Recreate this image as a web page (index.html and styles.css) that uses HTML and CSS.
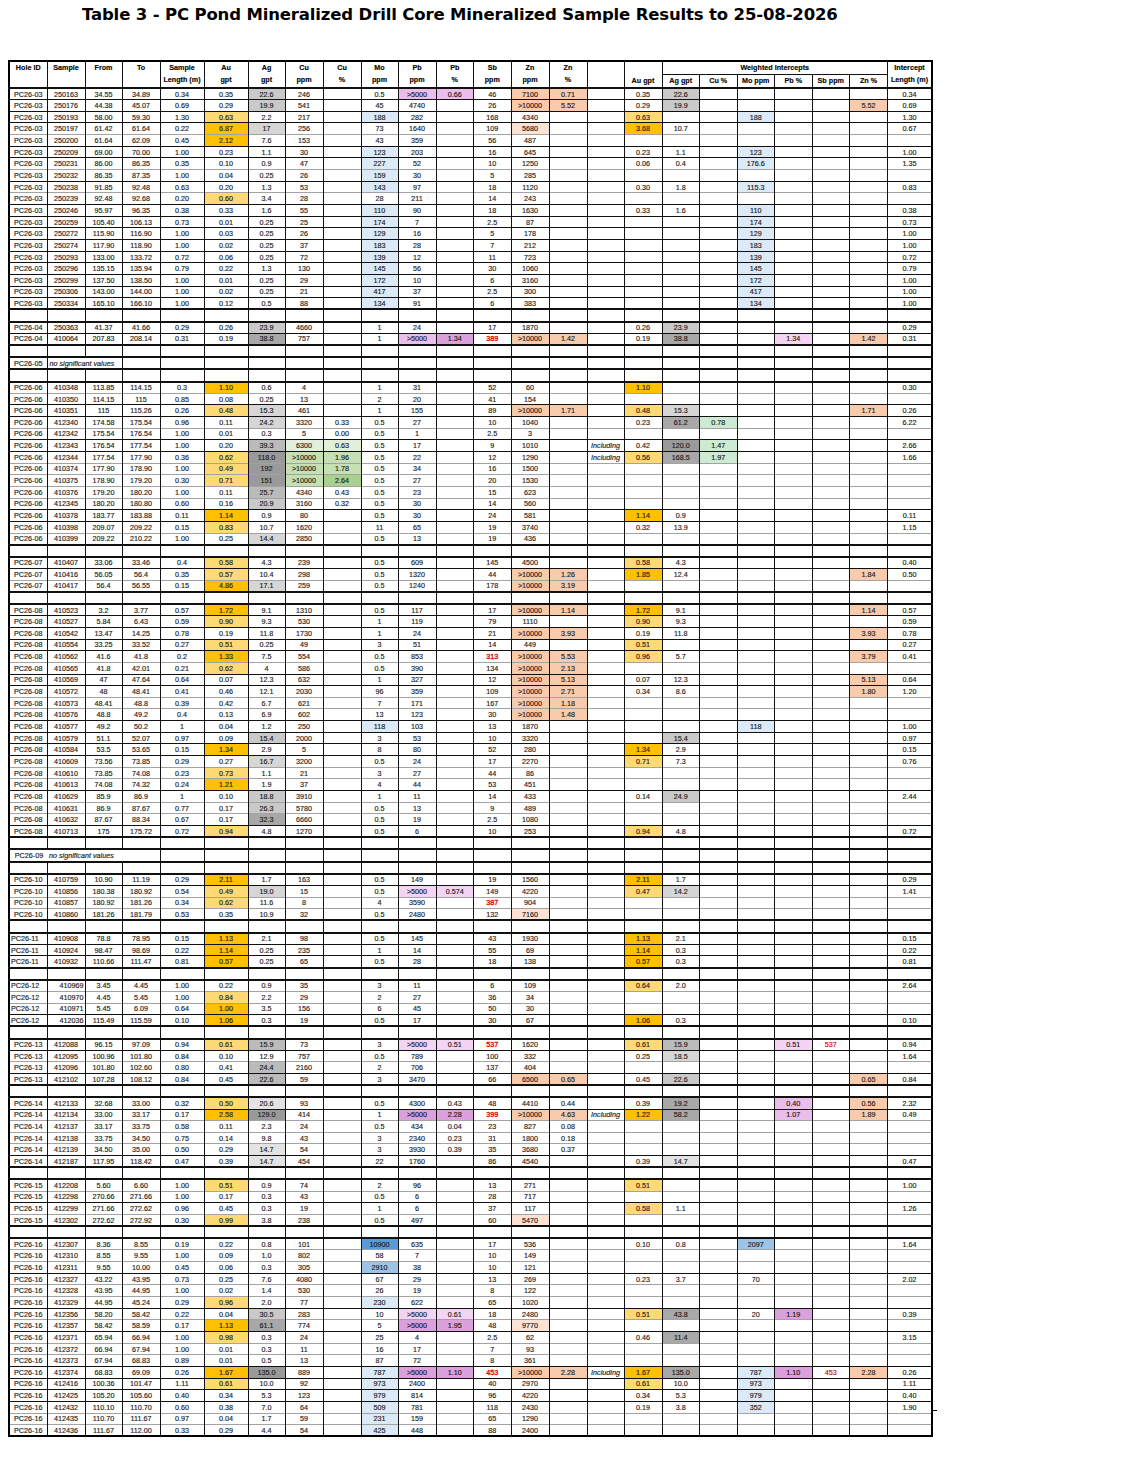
FILE: index.html
```html
<!DOCTYPE html>
<html lang="en">
<head>
<meta charset="utf-8">
<title>Table 3 - PC Pond Mineralized Drill Core Mineralized Sample Results</title>
<link rel="stylesheet" href="styles.css">
</head>
<body>
<div class="page">
  <h1 class="title">Table 3 - PC Pond Mineralized Drill Core Mineralized Sample Results to 25-08-2026</h1>
  <table class="results">
    <colgroup>
      <col class="w38"><col class="w38"><col class="w37"><col class="w38"><col class="w44">
      <col class="w44"><col class="w37"><col class="w38"><col class="w38"><col class="w37">
      <col class="w38"><col class="w375"><col class="w375"><col class="w38"><col class="w38">
      <col class="w37"><col class="w38"><col class="w375"><col class="w375"><col class="w375">
      <col class="w375"><col class="w375"><col class="w38"><col class="w445">
    </colgroup>
    <thead>
      <tr class="h1">
        <th rowspan="2">Hole ID</th>
        <th rowspan="2">Sample</th>
        <th rowspan="2">From</th>
        <th rowspan="2">To</th>
        <th rowspan="2">Sample<br>Length (m)</th>
        <th rowspan="2">Au<br>gpt</th>
        <th rowspan="2">Ag<br>gpt</th>
        <th rowspan="2">Cu<br>ppm</th>
        <th rowspan="2">Cu<br>%</th>
        <th rowspan="2">Mo<br>ppm</th>
        <th rowspan="2">Pb<br>ppm</th>
        <th rowspan="2">Pb<br>%</th>
        <th rowspan="2">Sb<br>ppm</th>
        <th rowspan="2">Zn<br>ppm</th>
        <th rowspan="2">Zn<br>%</th>
        <th rowspan="2"></th>
        <th rowspan="2" class="bottom">Au gpt</th>
        <th colspan="6">Weighted Intercepts</th>
        <th rowspan="2">Intercept<br>Length (m)</th>
      </tr>
      <tr class="h2">
        <th>Ag gpt</th><th>Cu %</th><th>Mo ppm</th><th>Pb %</th><th>Sb ppm</th><th>Zn %</th>
      </tr>
    </thead>
    <tbody id="rows"></tbody>
  </table>
  <span class="tick"></span>
</div>
<script src="script.js"></script>
</body>
</html>
```

FILE: styles.css
```css
* { box-sizing: border-box; }
html, body { margin: 0; padding: 0; background: #fff; }
body { font-family: "Liberation Sans", Arial, sans-serif; color: #1a1a1a; }

.page { position: relative; padding: 5px 0 0 8px; }

.title {
  margin: 0 0 35px 74px;
  font-family: "DejaVu Sans", Verdana, sans-serif;
  font-weight: bold;
  font-size: 16.5px;
  line-height: 20px;
  letter-spacing: -0.15px;
  color: #000;
  white-space: nowrap;
}

.results {
  width: 925px;
  table-layout: fixed;
  border-collapse: collapse;
  border: 2px solid #000;
  font-size: 7.2px;
  -webkit-text-stroke: 0.15px #1a1a1a;
}
.w37 { width: 37px; }
.w375 { width: 37.5px; }
.w38 { width: 38px; }
.w44 { width: 44px; }
.w445 { width: 44.5px; }

.results th {
  font-weight: bold;
  font-size: 7.2px;
  color: #000;
  vertical-align: top;
  line-height: 12px;
  padding: 0;
  border-top: 1px solid #111;
  border-left: 1px solid #111;
  white-space: nowrap;
}
.results th.bottom { vertical-align: bottom; }
.results tr.h1, .results tr.h2 { height: 12px; }

.results td {
  border-top: 1px solid #111;
  border-left: 1px solid #111;
  padding: 0 1px;
  text-align: center;
  vertical-align: middle;
  white-space: nowrap;
  overflow: hidden;
  line-height: 9px;
}
.results tr.d { height: 11.67px; }
.results tr.blank, .results tr.ns { height: 12.2px; }
.results tr.cont td { border-top-color: #a3a3a3; }
.results tr.sep td, .results tr.blank td, .results tr.ns td { border-top-width: 2px; }

.results td.la { text-align: left; }
.results td.ra { text-align: right; }
.results td.note { text-align: left; font-style: italic; overflow: visible; padding-left: 2px; }
.results td.notewide { text-align: left; padding: 0; overflow: visible; }
.nsh { display: inline-block; width: 38px; text-align: center; }
.nst { font-style: italic; padding-left: 1px; }
.results td.inc { font-style: italic; }

/* Au */
.results td.a1 { background: #ffd975; }
.results td.a2 { background: #ffc000; }
/* Ag */
.results td.ga { background: #e3e3e3; }
.results td.gb { background: #d6d6d6; }
.results td.gc { background: #c9c9c9; }
.results td.gd { background: #bbbbbb; }
.results td.ge { background: #a8a8a8; }
.results td.gf { background: #9a9a9a; }
/* Cu */
.results td.c1 { background: #e2efda; }
.results td.c2 { background: #c6e0b4; }
.results td.c3 { background: #a9d08e; }
.results td.cw { background: #cdebd2; }
/* Mo */
.results td.b1 { background: #dce9f7; }
.results td.b2 { background: #9dc3e6; }
.results td.b3 { background: #5b9bd5; }
/* Pb */
.results td.p1 { background: #f3d5f3; }
.results td.p2 { background: #ebbdeb; }
.results td.p3 { background: #dca0dc; }
/* Zn */
.results td.z0 { background: #fbe2d5; }
.results td.z1 { background: #f8cbad; }
/* Sb */
.results td.r { color: #e00000; -webkit-text-stroke: 0.3px #e00000; }
.results td.rw { color: #d00000; -webkit-text-stroke: 0.15px #d00000; }

.tick {
  position: absolute;
  left: 931px;
  top: 1410px;
  width: 6px;
  height: 1px;
  background: #000;
}
```

FILE: script.js
```js
(function () {
  var groups = [
    { h: 'PC26-03', r: [
      '250163|34.55|34.89|0.34|0.35|22.6~gc|246||0.5|>5000~p2|0.66~p2|46|7100~z1|0.71~z1;0.34||0.35|22.6~gc',
      '250176|44.38|45.07|0.69|0.29|19.9~gc|541||45|4740||26|>10000~z1|5.52~z1;0.69||0.29|19.9~gc|||||5.52~z1',
      '250193|58.00|59.30|1.30|0.63~a1|2.2|217||188~b1|282||168|4340;1.30||0.63~a1|||188~b1',
      '250197|61.42|61.64|0.22|6.87~a2|17~gb|256||73|1640||109|5680~z0;0.67||3.68~a2|10.7',
      '250200|61.64|62.09|0.45|2.12~a2|7.6|153||43|359||56|487',
      '250209|69.00|70.00|1.00|0.23|1.1|30||123~b1|203||16|645;1.00||0.23|1.1||123~b1',
      '250231|86.00|86.35|0.35|0.10|0.9|47||227~b1|52||10|1250;1.35||0.06|0.4||176.6~b1',
      '250232|86.35|87.35|1.00|0.04|0.25|26||159~b1|30||5|285',
      '250238|91.85|92.48|0.63|0.20|1.3|53||143~b1|97||18|1120;0.83||0.30|1.8||115.3~b1',
      '250239|92.48|92.68|0.20|0.60~a1|3.4|28||28|211||14|243',
      '250246|95.97|96.35|0.38|0.33|1.6|55||110~b1|90||18|1630;0.38||0.33|1.6||110~b1',
      '250259|105.40|106.13|0.73|0.01|0.25|25||174~b1|7||2.5|87;0.73|||||174~b1',
      '250272|115.90|116.90|1.00|0.03|0.25|26||129~b1|16||5|178;1.00|||||129~b1',
      '250274|117.90|118.90|1.00|0.02|0.25|37||183~b1|28||7|212;1.00|||||183~b1',
      '250293|133.00|133.72|0.72|0.06|0.25|72||139~b1|12||11|723;0.72|||||139~b1',
      '250296|135.15|135.94|0.79|0.22|1.3|130||145~b1|56||30|1060;0.79|||||145~b1',
      '250299|137.50|138.50|1.00|0.01|0.25|29||172~b1|10||6|3160;1.00|||||172~b1',
      '250306|143.00|144.00|1.00|0.02|0.25|21||417~b1|37||2.5|300;1.00|||||417~b1',
      '250334|165.10|166.10|1.00|0.12|0.5|88||134~b1|91||6|383;1.00|||||134~b1'
    ]},
    { h: 'PC26-04', r: [
      '250363|41.37|41.66|0.29|0.26|23.9~gc|4660||1|24||17|1870;0.29||0.26|23.9~gc',
      '410064|207.83|208.14|0.31|0.19|38.8~ge|757||1|>5000~p2|1.34~p3|389~r|>10000~z1|1.42~z1;0.31||0.19|38.8~ge|||1.34~p1||1.42~z1'
    ]},
    { h: 'PC26-05', ns: 1 },
    { h: 'PC26-06', r: [
      '410348|113.85|114.15|0.3|1.10~a2|0.6|4||1|31||52|60;0.30||1.10~a2',
      '410350|114.15|115|0.85|0.08|0.25|13||2|20||41|154',
      '410351|115|115.26|0.26|0.48~a1|15.3~gb|461||1|155||89|>10000~z1|1.71~z1;0.26||0.48~a1|15.3~gb|||||1.71~z1',
      '412340|174.58|175.54|0.96|0.11|24.2~gb|3320|0.33|0.5|27||10|1040;6.22||0.23|61.2~ge|0.78~cw',
      '412342|175.54|176.54|1.00|0.01|0.3|5|0.00|0.5|1||2.5|3',
      '412343|176.54|177.54|1.00|0.20|39.3~gd|6300~c1|0.63~c1|0.5|17||9|1010;2.66|Including|0.42|120.0~gf|1.47~cw',
      '412344|177.54|177.90|0.36|0.62~a1|118.0~gf|>10000~c2|1.96~c2|0.5|22||12|1290;1.66|Including|0.56~a1|168.5~ge|1.97~cw',
      '410374|177.90|178.90|1.00|0.49~a1|192~gf|>10000~c2|1.78~c2|0.5|34||16|1500',
      '410375|178.90|179.20|0.30|0.71~a1|151~gf|>10000~c2|2.64~c3|0.5|27||20|1530',
      '410376|179.20|180.20|1.00|0.11|25.7~gd|4340|0.43|0.5|23||15|623',
      '412345|180.20|180.80|0.60|0.16|20.9~gc|3160|0.32|0.5|30||14|560',
      '410378|183.77|183.88|0.11|1.14~a2|0.9|80||0.5|30||24|581;0.11||1.14~a2|0.9',
      '410398|209.07|209.22|0.15|0.83~a1|10.7|1620||11|65||19|3740;1.15||0.32|13.9',
      '410399|209.22|210.22|1.00|0.25|14.4~gb|2850||0.5|13||19|436'
    ]},
    { h: 'PC26-07', r: [
      '410407|33.06|33.46|0.4|0.58~a1|4.3|239||0.5|609||145|4500;0.40||0.58~a1|4.3',
      '410416|56.05|56.4|0.35|0.57~a1|10.4|298||0.5|1320||44|>10000~z1|1.26~z1;0.50||1.85~a2|12.4|||||1.84~z1',
      '410417|56.4|56.55|0.15|4.86~a2|17.1~gb|259||0.5|1240||178|>10000~z1|3.19~z1'
    ]},
    { h: 'PC26-08', r: [
      '410523|3.2|3.77|0.57|1.72~a2|9.1|1310||0.5|117||17|>10000~z1|1.14~z1;0.57||1.72~a2|9.1|||||1.14~z1',
      '410527|5.84|6.43|0.59|0.90~a1|9.3|530||1|119||79|1110;0.59||0.90~a1|9.3',
      '410542|13.47|14.25|0.78|0.19|11.8|1730||1|24||21|>10000~z1|3.93~z1;0.78||0.19|11.8|||||3.93~z1',
      '410554|33.25|33.52|0.27|0.51~a1|0.25|49||3|51||14|449;0.27||0.51~a1',
      '410562|41.6|41.8|0.2|1.33~a2|7.5|554||0.5|853||313~r|>10000~z1|5.53~z1;0.41||0.96~a1|5.7|||||3.79~z1',
      '410565|41.8|42.01|0.21|0.62~a1|4|586||0.5|390||134|>10000~z1|2.13~z1',
      '410569|47|47.64|0.64|0.07|12.3|632||1|327||12|>10000~z1|5.13~z1;0.64||0.07|12.3|||||5.13~z1',
      '410572|48|48.41|0.41|0.46|12.1|2030||96|359||109|>10000~z1|2.71~z1;1.20||0.34|8.6|||||1.80~z1',
      '410573|48.41|48.8|0.39|0.42|6.7|621||7|171||167|>10000~z1|1.18~z1',
      '410576|48.8|49.2|0.4|0.13|6.9|602||13|123||30|>10000~z1|1.48~z1',
      '410577|49.2|50.2|1|0.04|1.2|250||118~b1|103||13|1870;1.00|||||118~b1',
      '410579|51.1|52.07|0.97|0.09|15.4~gc|2000||3|53||10|3320;0.97|||15.4~gc',
      '410584|53.5|53.65|0.15|1.34~a2|2.9|5||8|80||52|280;0.15||1.34~a2|2.9',
      '410609|73.56|73.85|0.29|0.27|16.7~gb|3200||0.5|24||17|2270;0.76||0.71~a1|7.3',
      '410610|73.85|74.08|0.23|0.73~a1|1.1|21||3|27||44|86',
      '410613|74.08|74.32|0.24|1.21~a2|1.9|37||4|44||53|451',
      '410629|85.9|86.9|1|0.10|18.8~gc|3910||1|11||14|433;2.44||0.14|24.9~gc',
      '410631|86.9|87.67|0.77|0.17|26.3~gc|5780||0.5|13||9|489',
      '410632|87.67|88.34|0.67|0.17|32.3~ge|6660||0.5|19||2.5|1080',
      '410713|175|175.72|0.72|0.94~a1|4.8|1270||0.5|6||10|253;0.72||0.94~a1|4.8'
    ]},
    { h: 'PC26-09', ns: 2 },
    { h: 'PC26-10', r: [
      '410759|10.90|11.19|0.29|2.11~a2|1.7|163||0.5|149||19|1560;0.29||2.11~a2|1.7',
      '410856|180.38|180.92|0.54|0.49~a1|19.0~gb|15||0.5|>5000~p1|0.574~p1|149|4220;1.41||0.47~a1|14.2~gb',
      '410857|180.92|181.26|0.34|0.62~a1|11.6|8||4|3590||387~r|904',
      '410860|181.26|181.79|0.53|0.35|10.9|32||0.5|2480||132|7160~z0'
    ]},
    { h: 'PC26-11', ha: 'la', r: [
      '410908|78.8|78.95|0.15|1.13~a2|2.1|98||0.5|145||43|1930;0.15||1.13~a2|2.1',
      '410924|98.47|98.69|0.22|1.14~a2|0.25|235||1|14||55|69;0.22||1.14~a2|0.3',
      '410932|110.66|111.47|0.81|0.57~a2|0.25|65||0.5|28||18|138;0.81||0.57~a2|0.3'
    ]},
    { h: 'PC26-12', ha: 'la', sa: 'ra', r: [
      '410969|3.45|4.45|1.00|0.22|0.9|35||3|11||6|109;2.64||0.64~a1|2.0',
      '410970|4.45|5.45|1.00|0.84~a1|2.2|29||2|27||36|34',
      '410971|5.45|6.09|0.64|1.00~a2|3.5|156||6|45||50|30',
      '412036|115.49|115.59|0.10|1.06~a2|0.3|19||0.5|17||30|67;0.10||1.06~a2|0.3'
    ]},
    { h: 'PC26-13', r: [
      '412088|96.15|97.09|0.94|0.61~a1|15.9~gd|73||3|>5000~p1|0.51~p1|537~r|1620;0.94||0.61~a1|15.9~gd|||0.51~p1|537~rw',
      '412095|100.96|101.80|0.84|0.10|12.9|757||0.5|789||100|332;1.64||0.25|18.5~gb',
      '412096|101.80|102.60|0.80|0.41|24.4~gd|2160||2|706||137|404',
      '412102|107.28|108.12|0.84|0.45|22.6~gd|59||3|3470||66|6500~z1|0.65~z1;0.84||0.45|22.6~gc|||||0.65~z1'
    ]},
    { h: 'PC26-14', r: [
      '412133|32.68|33.00|0.32|0.50~a1|20.6~ga|93||0.5|4300|0.43|48|4410|0.44;2.32||0.39|19.2~ge|||0.40~p2||0.56~z1',
      '412134|33.00|33.17|0.17|2.58~a2|129.0~gf|414||1|>5000~p3|2.28~p3|399~r|>10000~z1|4.63~z1;0.49|Including|1.22~a2|58.2~ge|||1.07~p2||1.89~z1',
      '412137|33.17|33.75|0.58|0.11|2.3|24||0.5|434|0.04|23|827|0.08',
      '412138|33.75|34.50|0.75|0.14|9.8|43||3|2340|0.23|31|1800|0.18',
      '412139|34.50|35.00|0.50|0.29|14.7~ga|54||3|3930|0.39|35|3680|0.37',
      '412187|117.95|118.42|0.47|0.39|14.7~ga|454||22|1760||86|4540;0.47||0.39|14.7~ga'
    ]},
    { h: 'PC26-15', r: [
      '412208|5.60|6.60|1.00|0.51~a1|0.9|74||2|96||13|271;1.00||0.51~a1',
      '412298|270.66|271.66|1.00|0.17|0.3|43||0.5|6||28|717',
      '412299|271.66|272.62|0.96|0.45|0.3|19||1|6||37|117;1.26||0.58~a1|1.1',
      '412302|272.62|272.92|0.30|0.99~a1|3.8|238||0.5|497||60|5470~z0'
    ]},
    { h: 'PC26-16', r: [
      '412307|8.36|8.55|0.19|0.22|0.8|101||10900~b3|635||17|536;1.64||0.10|0.8||2097~b2',
      '412310|8.55|9.55|1.00|0.09|1.0|802||58|7||10|149',
      '412311|9.55|10.00|0.45|0.06|0.3|305||2910~b2|38||10|121',
      '412327|43.22|43.95|0.73|0.25|7.6|4080||67|29||13|269;2.02||0.23|3.7||70',
      '412328|43.95|44.95|1.00|0.02|1.4|530||26|19||8|122',
      '412329|44.95|45.24|0.29|0.96~a1|2.0|77||230~b1|622||65|1020',
      '412356|58.20|58.42|0.22|0.04|30.5~gc|283||10|>5000~p1|0.61~p1|18|2480;0.39||0.51~a1|43.8~ge||20|1.19~p3',
      '412357|58.42|58.59|0.17|1.13~a2|61.1~ge|774||5|>5000~p3|1.95~p3|48|9770~z0',
      '412371|65.94|66.94|1.00|0.98~a1|0.3|24||25|4||2.5|62;3.15||0.46|11.4~ge',
      '412372|66.94|67.94|1.00|0.01|0.3|11||16|17||7|93',
      '412373|67.94|68.83|0.89|0.01|0.5|13||87|72||8|361',
      '412374|68.83|69.09|0.26|1.67~a2|135.0~gf|889||787~b1|>5000~p3|1.10~p3|453~r|>10000~z1|2.28~z1;0.26|Including|1.67~a2|135.0~ge||787~b1|1.10~p3|453~rw|2.28~z1',
      '412416|100.36|101.47|1.11|0.61~a1|10.0|92||973~b1|2400||40|2970;1.11||0.61~a1|10.0||973~b1',
      '412425|105.20|105.60|0.40|0.34|5.3|123||979~b1|814||96|4220;0.40||0.34|5.3||979~b1',
      '412432|110.10|110.70|0.60|0.38|7.0|64||509~b1|781||118|2430;1.90||0.19|3.8||352~b1',
      '412435|110.70|111.67|0.97|0.04|1.7|59||231~b1|159||65|1290',
      '412436|111.67|112.00|0.33|0.29|4.4|54||425~b1|448||88|2400'
    ]}
  ];

  var body = document.getElementById('rows');
  var COLS = 24;

  function cell(tr, text, cls) {
    var td = document.createElement('td');
    if (text) td.textContent = text;
    if (cls) td.className = cls;
    tr.appendChild(td);
    return td;
  }
  function parse(v) {
    var p = (v || '').split('~');
    return { t: p[0], c: p[1] || '' };
  }
  function blank() {
    var tr = document.createElement('tr');
    tr.className = 'blank';
    for (var i = 0; i < COLS; i++) cell(tr);
    body.appendChild(tr);
  }

  groups.forEach(function (g, gi) {
    if (gi > 0) blank();
    if (g.ns) {
      var tr = document.createElement('tr');
      tr.className = 'ns';
      var n;
      if (g.ns === 1) {
        cell(tr, g.h);
        var td = cell(tr, 'no significant values', 'note');
        td.colSpan = 2;
        n = 3;
      } else {
        var wide = document.createElement('td');
        wide.colSpan = 4;
        wide.className = 'notewide';
        var a = document.createElement('span');
        a.className = 'nsh';
        a.textContent = g.h;
        var b = document.createElement('span');
        b.className = 'nst';
        b.textContent = 'no significant values';
        wide.appendChild(a);
        wide.appendChild(b);
        tr.appendChild(wide);
        n = 4;
      }
      for (; n < COLS; n++) cell(tr);
      body.appendChild(tr);
      return;
    }
    g.r.forEach(function (s, ri) {
      var parts = s.split(';');
      var main = parts[0].split('|');
      var w = parts[1] ? parts[1].split('|') : [];
      while (main.length < 14) main.push('');
      while (w.length < 9) w.push('');
      var tr = document.createElement('tr');
      var cls = ['d'];
      if (ri === 0) cls.push('sep');
      else if (!parts[1]) cls.push('cont');
      tr.className = cls.join(' ');
      cell(tr, g.h, g.ha || '');
      main.forEach(function (v, i) {
        var p = parse(v);
        var c = p.c;
        if (i === 0 && g.sa) c = (c + ' ' + g.sa).trim();
        cell(tr, p.t, c);
      });
      [1, 2, 3, 4, 5, 6, 7, 8, 0].forEach(function (k) {
        var p = parse(w[k]);
        var c = p.c;
        if (k === 1 && p.t) c = 'inc';
        cell(tr, p.t, c);
      });
      body.appendChild(tr);
    });
  });
})();
```
